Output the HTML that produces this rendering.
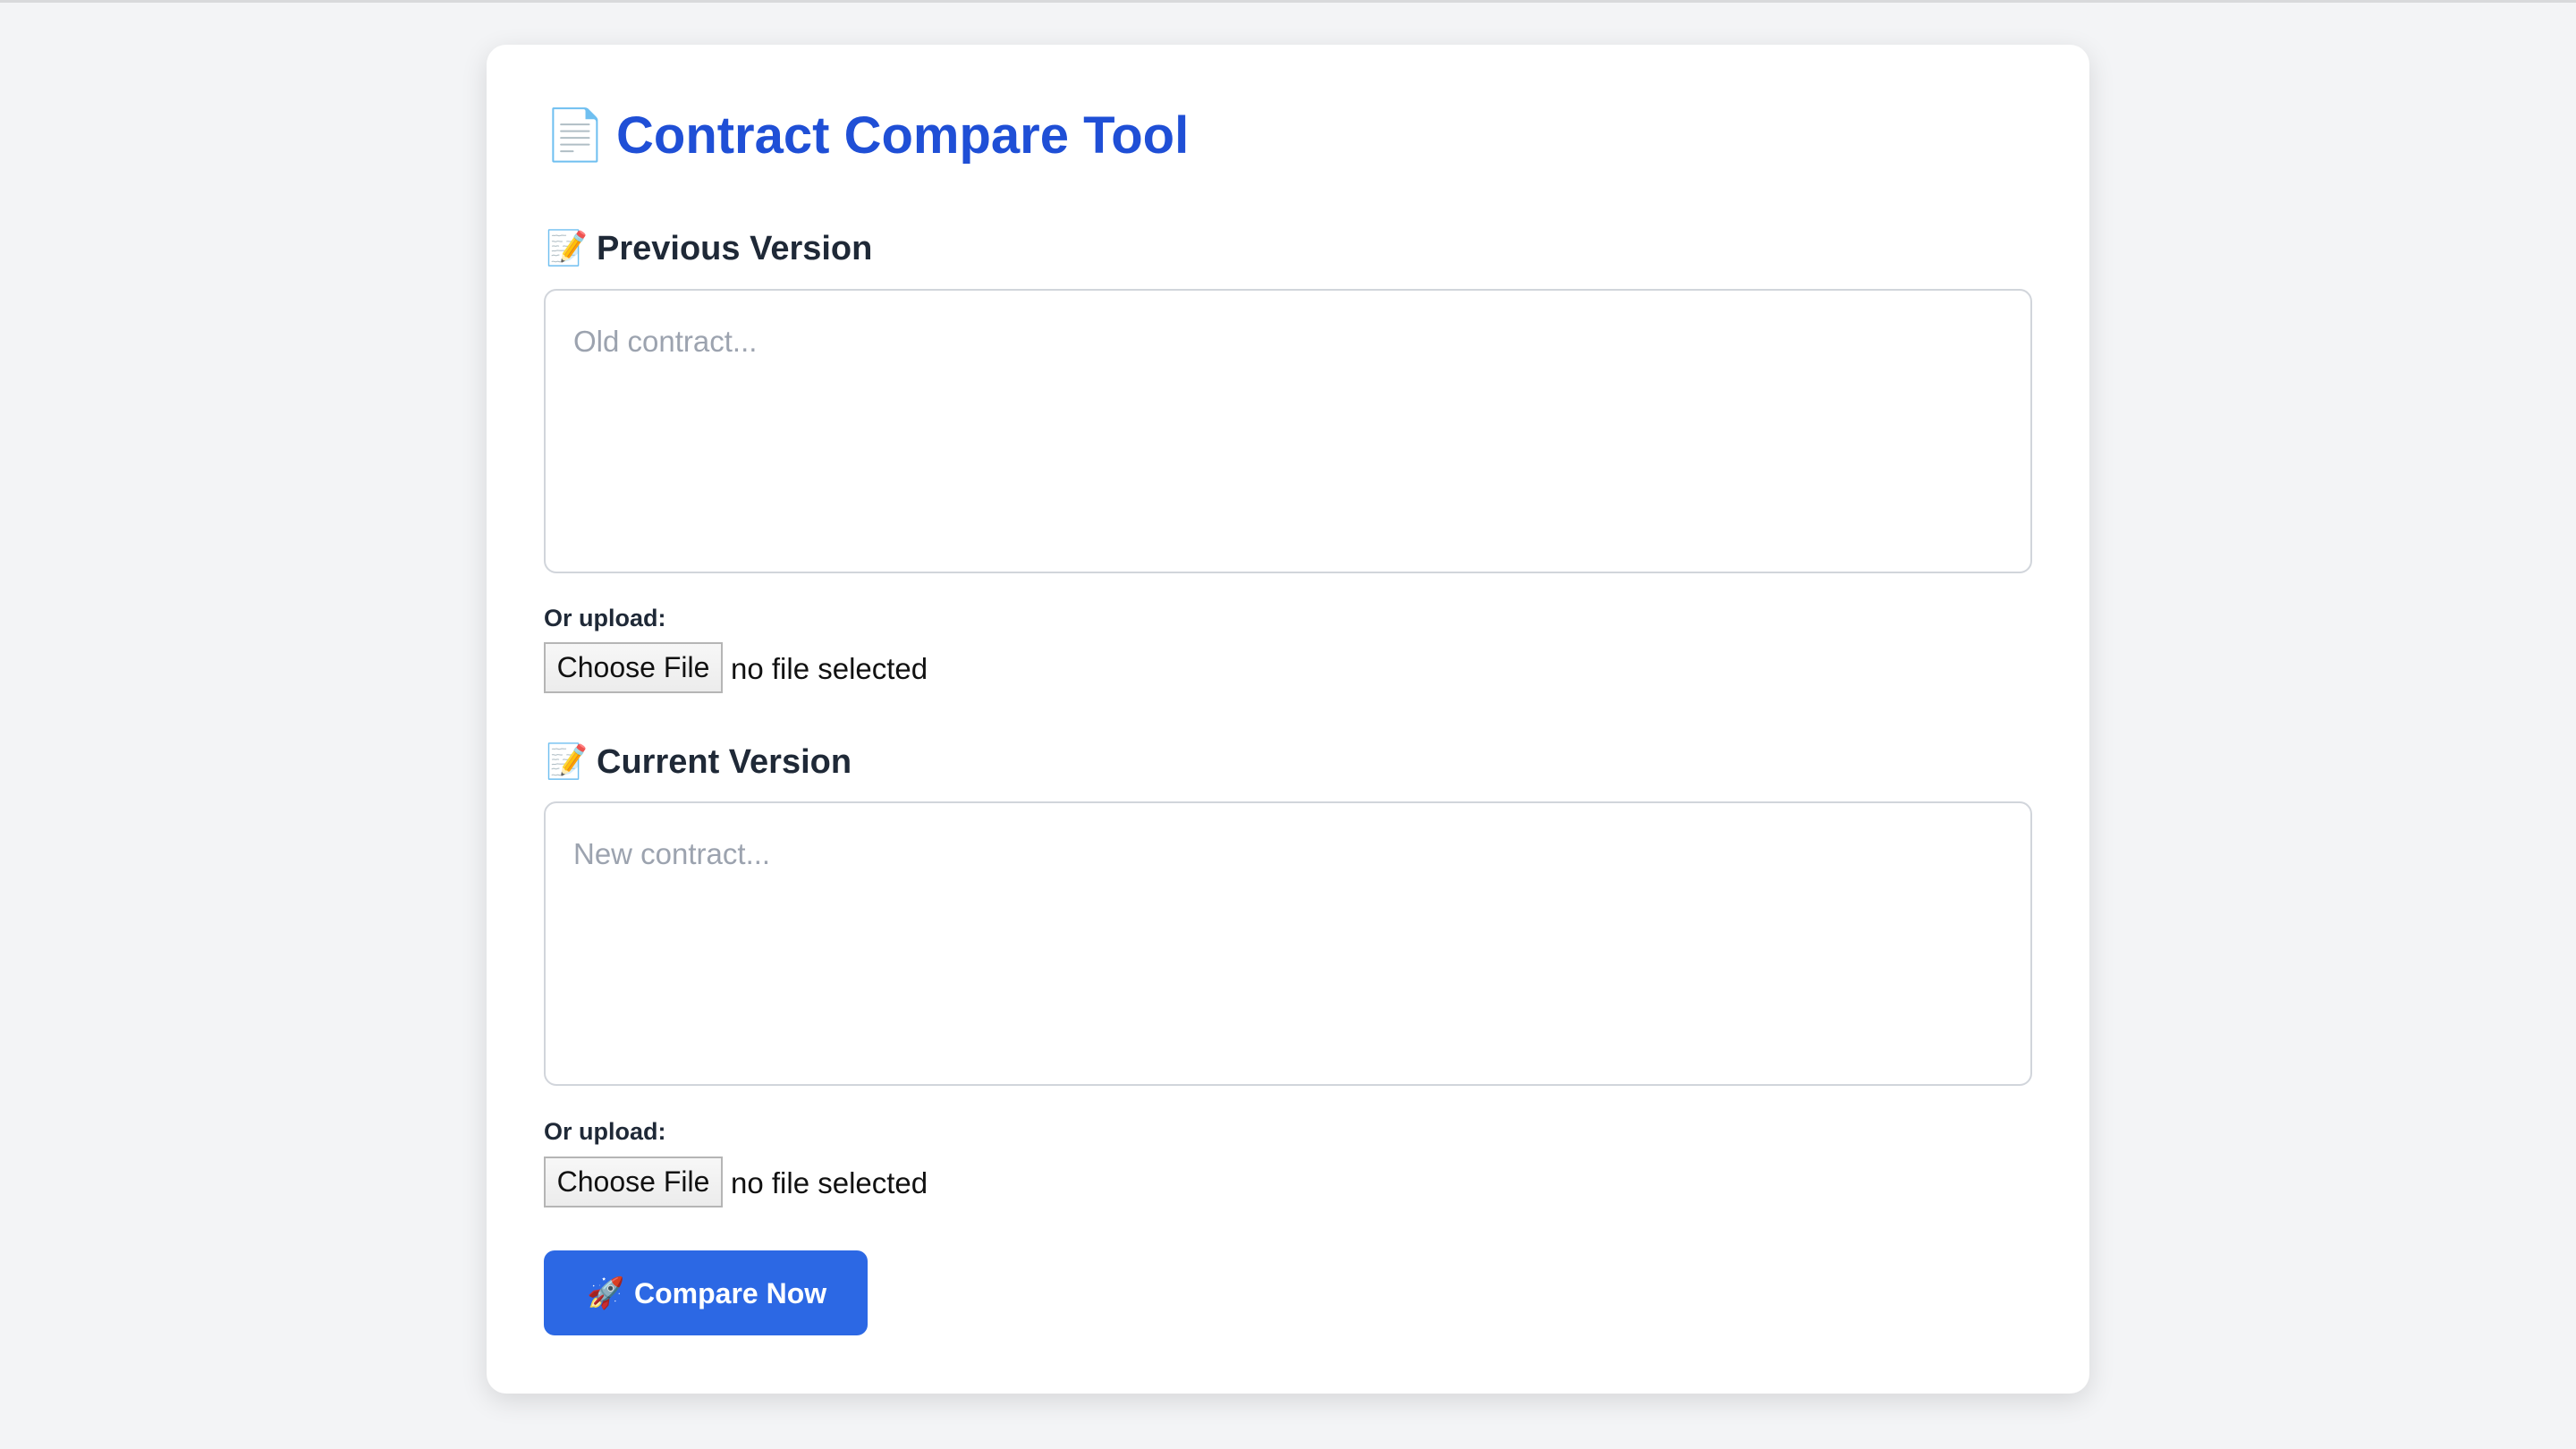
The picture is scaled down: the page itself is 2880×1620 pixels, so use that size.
<!DOCTYPE html>
<html><head><meta charset="utf-8"><style>
*{box-sizing:border-box;margin:0;padding:0}
body{width:2880px;height:1620px;background:#f3f4f6;font-family:"Liberation Sans",sans-serif;position:relative;overflow:hidden}
.line{position:absolute;left:0;top:0;width:2880px;height:3px;background:#d8d9db}
.card{position:absolute;left:544px;top:50px;width:1792px;height:1508px;background:#fff;border-radius:22px;box-shadow:0 8px 30px rgba(0,0,0,.12)}
.a{position:absolute;white-space:nowrap}
h1{position:absolute;left:689px;top:118px;font-size:58px;color:#1f4fd6;font-weight:bold;white-space:nowrap}
.h2{font-size:38px;font-weight:bold;color:#1f2937}
.ta{position:absolute;left:608px;width:1664px;height:318px;border:2px solid #d1d5db;border-radius:14px;background:#fff}
.ph{position:absolute;left:31px;top:38px;font-size:33px;color:#9ca3af;white-space:nowrap}
.lbl{font-size:27px;font-weight:bold;color:#1f2937}
.fb{position:absolute;left:608px;width:200px;height:57px;border:2px solid #b5b5b5;background:linear-gradient(#f7f7f7,#ececec);font-size:32px;color:#111;text-align:center;line-height:53px;white-space:nowrap}
.nf{font-size:33px;color:#111}
.btn{position:absolute;left:608px;top:1398px;width:362px;height:95px;background:#2c68e4;border-radius:12px;color:#fff;font-size:32px;font-weight:bold;line-height:95px;white-space:nowrap}
.btn b{position:absolute;left:101px;top:1px}
.btn span{position:absolute;left:48px;top:1px;font-size:34px;font-weight:normal}
</style></head><body>
<div class="line"></div>
<div class="card"></div>
<div class="a" style="left:608px;top:118px;font-size:56px">📄</div>
<h1>Contract Compare Tool</h1>
<div class="a" style="left:610px;top:256px;font-size:38px">📝</div>
<div class="a h2" style="left:667px;top:257px">Previous Version</div>
<div class="ta" style="top:323px"><div class="ph">Old contract...</div></div>
<div class="a lbl" style="left:608px;top:676px">Or upload:</div>
<div class="fb" style="top:718px">Choose File</div>
<div class="a nf" style="left:817px;top:729px">no file selected</div>
<div class="a" style="left:610px;top:830px;font-size:38px">📝</div>
<div class="a h2" style="left:667px;top:831px">Current Version</div>
<div class="ta" style="top:896px"><div class="ph">New contract...</div></div>
<div class="a lbl" style="left:608px;top:1250px">Or upload:</div>
<div class="fb" style="top:1293px">Choose File</div>
<div class="a nf" style="left:817px;top:1304px">no file selected</div>
<div class="btn"><span>🚀</span><b>Compare Now</b></div>
</body></html>
